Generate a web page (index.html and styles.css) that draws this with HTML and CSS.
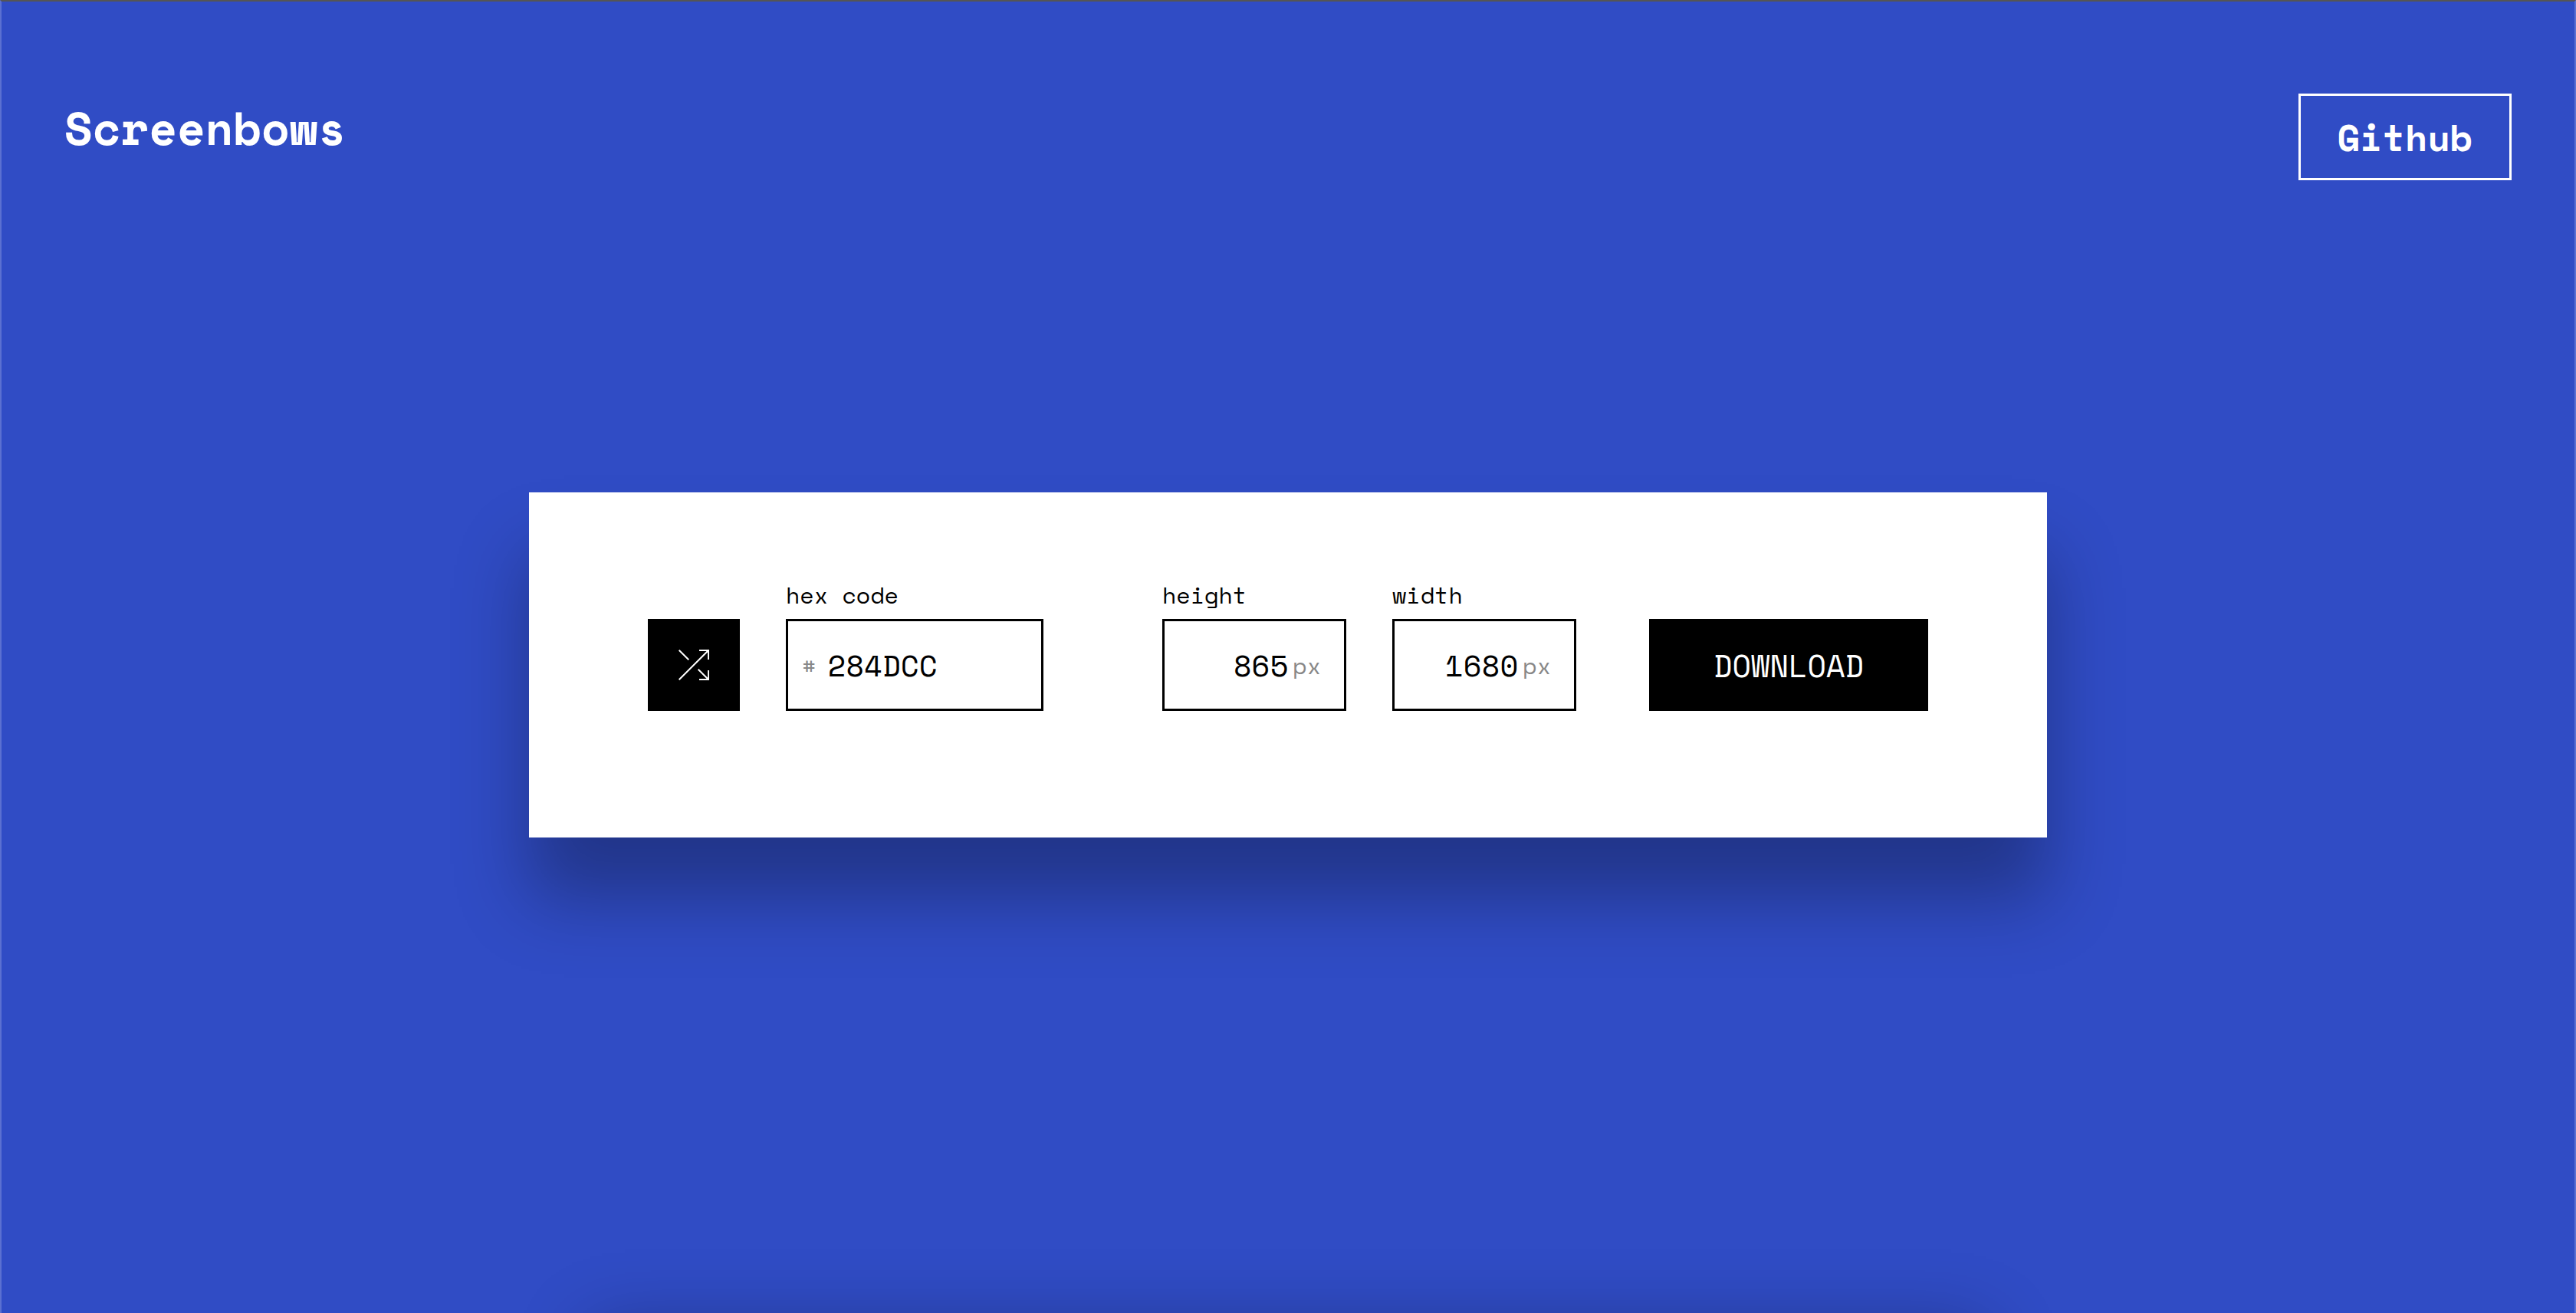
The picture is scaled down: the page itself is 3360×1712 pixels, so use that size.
FILE: index.html
```html
<!DOCTYPE html>
<html lang="en">
<head>
  <meta charset="utf-8">
  <meta name="viewport" content="width=device-width, initial-scale=1">
  <title>Screenbows</title>
  <link rel="stylesheet" href="styles.css">
</head>
<body>
  <div class="page">
    <header class="header">
      <h1 class="logo">Screenbows</h1>
      <a class="github" href="#github">Github</a>
    </header>
    <main class="main">
      <form class="card">
        <button class="button shuffle" type="button" aria-label="Random colour">
          <svg class="shuffle-icon" viewBox="0 0 40 40" aria-hidden="true">
            <path d="M.7 .7 13.3 13.3M.7 39.3 39 1M27 .9H39.1V13M25.7 25.7 39 39M27 39.1H39.1V27"/>
          </svg>
        </button>
        <div class="group">
          <label class="label" for="hex">hex code</label>
          <div class="field field-hex">
            <span class="affix">#</span>
            <input class="input" id="hex" type="text" value="284DCC" maxlength="6">
          </div>
        </div>
        <div class="sizes">
          <div class="group">
            <label class="label" for="height">height</label>
            <div class="field field-size">
              <input class="input" id="height" type="text" inputmode="numeric" value="865">
              <span class="affix">px</span>
            </div>
          </div>
          <div class="group">
            <label class="label" for="width">width</label>
            <div class="field field-size">
              <input class="input" id="width" type="text" inputmode="numeric" value="1680">
              <span class="affix">px</span>
            </div>
          </div>
        </div>
        <button class="button download" type="button">DOWNLOAD</button>
      </form>
    </main>
  </div>
</body>
</html>
```
FILE: styles.css
```css
* {
  box-sizing: border-box;
}

body {
  margin: 0;
  font-family: "Space Mono", "Liberation Mono", monospace;
  color: #000;
}

.page {
  position: relative;
  min-height: 100vh;
  overflow: hidden;
  background: #304cc5;
  border: 2px solid #5b70d1;
  border-top-color: #555;
  border-bottom: 0;
}

/* shadow of the panel that starts below the fold */
.page::after {
  content: "";
  position: absolute;
  top: 100%;
  left: 50%;
  width: 1820px;
  height: 450px;
  margin-top: 20px;
  transform: translateX(-50%);
  box-shadow: 0 0 90px rgba(0, 0, 0, 0.3);
}

.header {
  display: flex;
  align-items: flex-start;
  justify-content: space-between;
  padding: 120px 82px 0;
  color: #fff;
}

.logo {
  margin: 0;
  font-size: 60px;
  line-height: 90px;
  font-weight: 700;
}

.github {
  padding: 26px 48px;
  border: 3px solid #fff;
  color: inherit;
  font-size: 48px;
  line-height: 55px;
  font-weight: 700;
  text-decoration: none;
}

.main {
  display: flex;
  justify-content: center;
  padding: 407px 40px 120px;
}

.card {
  display: flex;
  align-items: flex-end;
  gap: 60px;
  padding: 115px 155px 165px;
  background: #fff;
  box-shadow: 0 80px 90px rgba(0, 0, 0, 0.3);
}

.button {
  display: flex;
  align-items: center;
  justify-content: center;
  height: 120px;
  padding: 0;
  border: 0;
  background: #000;
  color: #fff;
  font: inherit;
}

.shuffle {
  width: 120px;
}

.shuffle-icon {
  width: 40px;
  height: 40px;
  fill: none;
  stroke: #fff;
  stroke-width: 2;
}

.download {
  width: 364px;
  margin-left: 35px;
  font-size: 40px;
}

.label {
  display: block;
  padding-bottom: 12px;
  font-size: 30px;
  line-height: 38px;
}

.field {
  display: flex;
  align-items: center;
  height: 120px;
  border: 3px solid #000;
}

.field-hex {
  width: 336px;
  gap: 15px;
  padding-left: 18px;
}

.field-size {
  width: 240px;
  gap: 6px;
  padding-right: 30px;
}

.field-size .input {
  text-align: right;
}

.input {
  flex: 1;
  min-width: 0;
  padding: 0;
  border: 0;
  outline: 0;
  background: transparent;
  color: inherit;
  font: inherit;
  font-size: 39px;
}

.affix {
  color: #888;
  font-size: 30px;
}

.sizes {
  display: flex;
  gap: 60px;
  margin-left: 95px;
}
```
